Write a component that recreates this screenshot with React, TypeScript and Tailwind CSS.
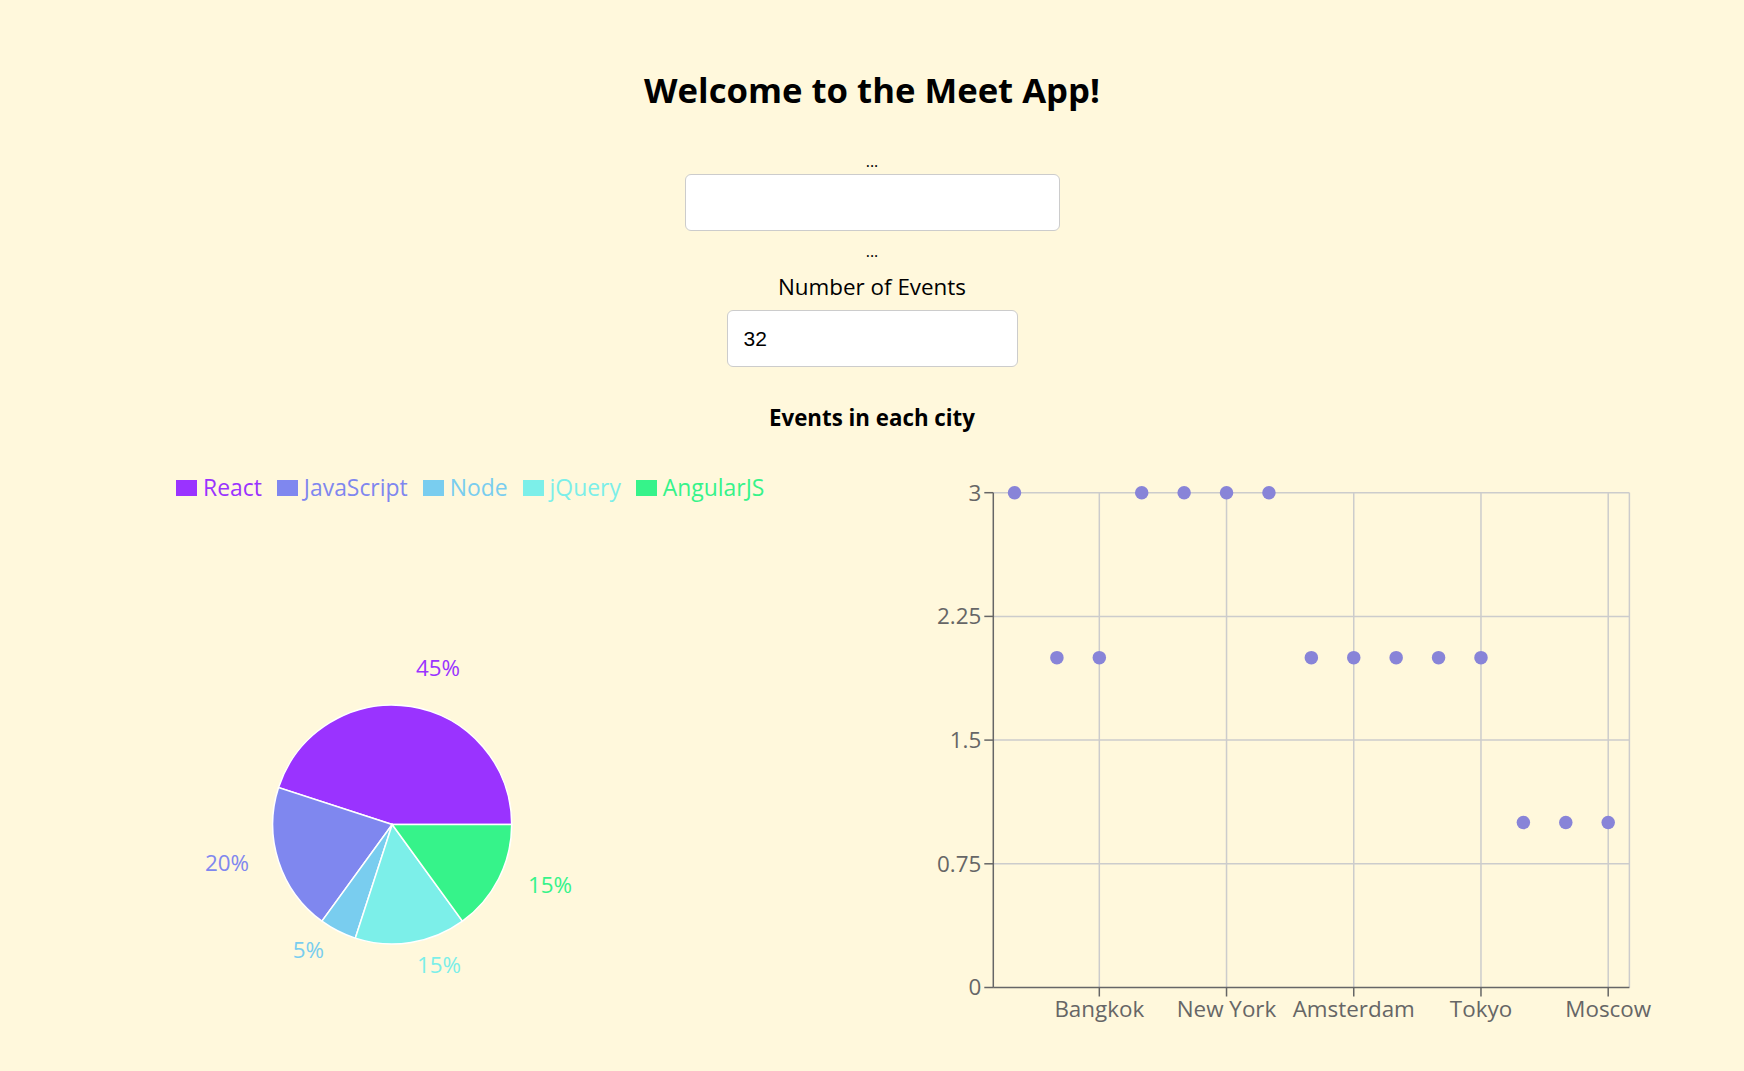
import React from 'react';

const SLICES = [
  { name: 'React', value: 45, color: '#9a33ff' },
  { name: 'JavaScript', value: 20, color: '#7f87ef' },
  { name: 'Node', value: 5, color: '#79cdef' },
  { name: 'jQuery', value: 15, color: '#7cefe9' },
  { name: 'AngularJS', value: 15, color: '#36f38a' },
];

// label spots measured from the reference (page coordinates)
const LABELS = [
  { x: 416, y: 668, anchor: 'start' },
  { x: 249, y: 863, anchor: 'end' },
  { x: 324, y: 950, anchor: 'end' },
  { x: 417, y: 965, anchor: 'start' },
  { x: 528, y: 885, anchor: 'start' },
];

const CX = 392.2;
const CY = 824.5;
const R = 119.5;

function pt(deg: number) {
  const a = (deg * Math.PI) / 180;
  return [CX + R * Math.cos(a), CY - R * Math.sin(a)];
}

function slicePath(from: number, to: number) {
  const [x1, y1] = pt(from);
  const [x2, y2] = pt(to);
  const large = to - from > 180 ? 1 : 0;
  return `M${CX},${CY} L${x1},${y1} A${R},${R} 0 ${large} 0 ${x2},${y2} Z`;
}

function PieBlock() {
  let acc = 0;
  const total = SLICES.reduce((s, d) => s + d.value, 0);
  return (
    <svg width={872} height={569} viewBox="0 502 872 569" className="block">
      {SLICES.map((s) => {
        const from = (acc / total) * 360;
        acc += s.value;
        const to = (acc / total) * 360;
        return (
          <path key={s.name} d={slicePath(from, to)} fill={s.color} stroke="#fff" strokeWidth={1.5} />
        );
      })}
      {SLICES.map((s, i) => (
        <text
          key={s.name}
          x={LABELS[i].x}
          y={LABELS[i].y}
          dy="0.357em"
          textAnchor={LABELS[i].anchor as 'start' | 'end'}
          fill={s.color}
          fontSize={22.4}
          fontFamily="'Open Sans', sans-serif"
        >
          {s.value}%
        </text>
      ))}
    </svg>
  );
}

const POINTS = [3, 2, 2, 3, 3, 3, 3, 2, 2, 2, 2, 2, 1, 1, 1];
const CITY_TICKS: Record<number, string> = {
  2: 'Bangkok',
  5: 'New York',
  8: 'Amsterdam',
  11: 'Tokyo',
  14: 'Moscow',
};

function ScatterBlock() {
  const left = 993.3;
  const right = 1629.4;
  const top = 492.7;
  const bottom = 987.5;
  const band = (right - left) / POINTS.length;
  const yOf = (v: number) => bottom - (v / 3) * (bottom - top);
  const xOf = (i: number) => left + band * (i + 0.5);
  const yTicks = [
    { v: 0, l: '0' },
    { v: 0.75, l: '0.75' },
    { v: 1.5, l: '1.5' },
    { v: 2.25, l: '2.25' },
    { v: 3, l: '3' },
  ];
  const xTickIdx = Object.keys(CITY_TICKS).map(Number);

  return (
    <svg width={872} height={640} viewBox="872 431 872 640" className="block">
      <g stroke="#cccccc" strokeWidth={1.5}>
        {yTicks.slice(1).map((t) => (
          <line key={t.l} x1={left} x2={right} y1={yOf(t.v)} y2={yOf(t.v)} />
        ))}
        {xTickIdx.map((i) => (
          <line key={i} x1={xOf(i)} x2={xOf(i)} y1={top} y2={bottom} />
        ))}
        <line x1={right} x2={right} y1={top} y2={bottom} />
      </g>

      <g stroke="#666666" strokeWidth={1.5}>
        <line x1={left} x2={left} y1={top} y2={bottom} />
        <line x1={left} x2={right} y1={bottom} y2={bottom} />
        {yTicks.map((t) => (
          <line key={t.l} x1={left - 9} x2={left} y1={yOf(t.v)} y2={yOf(t.v)} />
        ))}
        {xTickIdx.map((i) => (
          <line key={i} x1={xOf(i)} x2={xOf(i)} y1={bottom} y2={bottom + 9} />
        ))}
      </g>

      <g fill="#666666" fontSize={22.4} fontFamily="'Open Sans', sans-serif">
        {yTicks.map((t) => (
          <text key={t.l} x={left - 12} y={yOf(t.v)} dy="0.355em" textAnchor="end">
            {t.l}
          </text>
        ))}
        {xTickIdx.map((i) => (
          <text key={i} x={xOf(i)} y={bottom + 14} dy="0.71em" textAnchor="middle">
            {CITY_TICKS[i]}
          </text>
        ))}
      </g>

      {POINTS.map((v, i) => (
        <circle key={i} cx={xOf(i)} cy={yOf(v)} r={6.75} fill="#8884d8" />
      ))}
    </svg>
  );
}

export default function App() {
  return (
    <div className="min-h-screen bg-[#fff8dc] font-['Open_Sans',sans-serif] text-black">
      {/* ── Header + search ─────────────────────────────── */}
      <div className="flex flex-col items-center">
        <h1 className="mt-[66px] text-[34.7px] leading-[48px] font-bold">Welcome to the Meet App!</h1>
        <div className="mt-[37px] text-[16px] leading-[20px]">...</div>
        <input
          type="text"
          className="mt-[3px] w-[375px] h-[57px] bg-white border-[1.5px] border-[#cccccc] rounded-[6px] outline-none"
        />
        <div className="mt-[10px] text-[16px] leading-[20px]">...</div>
        <label className="mt-[11px] text-[22.4px] leading-[30px]">Number of Events</label>
        <input
          type="number"
          readOnly
          value={32}
          className="mt-[8px] w-[291px] h-[57px] px-[16px] bg-white border-[1.5px] border-[#cccccc] rounded-[6px] outline-none text-[21px] font-['Liberation_Sans',Arial,sans-serif]"
        />
        <h4 className="mt-[36px] mb-[-2px] text-[22.3px] leading-[30px] font-bold">Events in each city</h4>
      </div>

      {/* ── Charts ──────────────────────────────────────── */}
      <div className="flex">
        <div className="w-[872px]">
          <div className="flex items-center h-[30px] mt-[42px] mb-[-1px] pl-[176px]">
            {SLICES.map((s) => (
              <div key={s.name} className="flex items-center mr-[15px]">
                <span className="w-[21px] h-[15.75px] mr-[6px]" style={{ backgroundColor: s.color }} />
                <span className="text-[22.9px] leading-[30px]" style={{ color: s.color }}>
                  {s.name}
                </span>
              </div>
            ))}
          </div>
          <PieBlock />
        </div>
        <div className="w-[872px]">
          <ScatterBlock />
        </div>
      </div>
    </div>
  );
}
